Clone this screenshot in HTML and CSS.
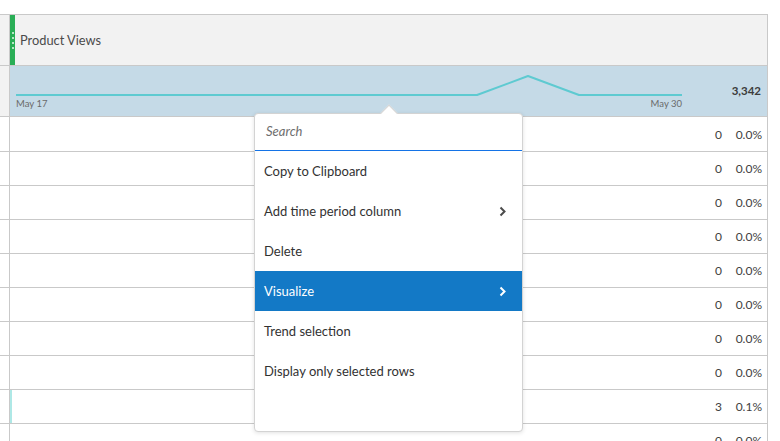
FILE: index.html
```html
<!DOCTYPE html>
<html>
<head>
<meta charset="utf-8">
<link rel="stylesheet" href="styles.css">
</head>
<body>
<div class="table">
  <div class="row head">
    <div class="gutter gray"></div>
    <div class="cell head-cell">
      <div class="grip"><i></i><i></i><i></i><i></i></div>
      <span class="title">Product Views</span>
    </div>
  </div>
  <div class="row band">
    <div class="gutter gray"></div>
    <div class="cell band-cell">
      <div class="chart">
        <svg class="spark" width="666" height="32" viewBox="0 0 666 32">
          <polyline points="0,29 461,29 512,10 563,29 666,29" fill="none" stroke="#5ecad1" stroke-width="2" stroke-linejoin="round"/>
        </svg>
        <div class="labels"><span>May 17</span><span>May 30</span></div>
      </div>
      <div class="total">3,342</div>
    </div>
  </div>
  <div class="row data first"><div class="gutter"></div><div class="cell num-cell"><span class="cnt">0</span><span class="pct">0.0%</span></div></div>
  <div class="row data"><div class="gutter"></div><div class="cell num-cell"><span class="cnt">0</span><span class="pct">0.0%</span></div></div>
  <div class="row data"><div class="gutter"></div><div class="cell num-cell"><span class="cnt">0</span><span class="pct">0.0%</span></div></div>
  <div class="row data"><div class="gutter"></div><div class="cell num-cell"><span class="cnt">0</span><span class="pct">0.0%</span></div></div>
  <div class="row data"><div class="gutter"></div><div class="cell num-cell"><span class="cnt">0</span><span class="pct">0.0%</span></div></div>
  <div class="row data"><div class="gutter"></div><div class="cell num-cell"><span class="cnt">0</span><span class="pct">0.0%</span></div></div>
  <div class="row data"><div class="gutter"></div><div class="cell num-cell"><span class="cnt">0</span><span class="pct">0.0%</span></div></div>
  <div class="row data"><div class="gutter"></div><div class="cell num-cell"><span class="cnt">0</span><span class="pct">0.0%</span></div></div>
  <div class="row data"><div class="gutter"></div><div class="cell num-cell marked"><span class="cnt">3</span><span class="pct">0.1%</span></div></div>
  <div class="row data"><div class="gutter"></div><div class="cell num-cell"><span class="cnt">0</span><span class="pct">0.0%</span></div></div>
</div>

<div class="menu">
  <div class="notch"></div>
  <div class="search"><span class="placeholder">Search</span></div>
  <div class="item">Copy to Clipboard</div>
  <div class="item sub">Add time period column
    <svg class="chev" width="7" height="11" viewBox="0 0 7 11"><polyline points="1.5,1.5 5.5,5.5 1.5,9.5" fill="none" stroke="currentColor" stroke-width="2"/></svg>
  </div>
  <div class="item">Delete</div>
  <div class="item sub active">Visualize
    <svg class="chev" width="7" height="11" viewBox="0 0 7 11"><polyline points="1.5,1.5 5.5,5.5 1.5,9.5" fill="none" stroke="currentColor" stroke-width="2"/></svg>
  </div>
  <div class="item">Trend selection</div>
  <div class="item">Display only selected rows</div>
</div>
</body>
</html>
```
FILE: styles.css
```css
html, body {
  margin: 0;
  padding: 0;
  background: #ffffff;
  font-family: Lato, "Open Sans", sans-serif;
  color: #4b4b4b;
  overflow: hidden;
}
body {
  width: 780px;
  height: 441px;
  padding-top: 14px;
  box-sizing: border-box;
  position: relative;
}
.table {
  width: 768px;
  border-top: 1px solid #c9c9c9;
  border-right: 1px solid #c9c9c9;
  box-sizing: border-box;
}
.row {
  display: flex;
  border-bottom: 1px solid #c9c9c9;
  box-sizing: border-box;
}
.gutter {
  width: 9px;
  flex: none;
  border-right: 1px solid #c9c9c9;
}
.gutter.gray { background: #f2f2f2; }
.cell { flex: 1; display: flex; }

.head { height: 51px; }
.head-cell { background: #f2f2f2; align-items: center; }
.grip {
  width: 5px;
  align-self: stretch;
  background: #2aae56;
  display: flex;
  flex-direction: column;
  align-items: center;
  justify-content: center;
  gap: 3px;
}
.grip i {
  display: block;
  width: 2px;
  height: 2px;
  background: #b6e6c6;
}
.title {
  margin-left: 5px;
  font-size: 12.8px;
  color: #4a4a4a;
}

.band { height: 51px; }
.band-cell { background: #c5dae7; align-items: center; }
.chart {
  width: 666px;
  margin-left: 6px;
  align-self: flex-start;
  display: flex;
  flex-direction: column;
}
.spark { display: block; }
.labels {
  display: flex;
  justify-content: space-between;
  font-size: 9.5px;
  line-height: 11px;
  color: #6a6a6a;
}
.total {
  flex: 1;
  text-align: right;
  padding-right: 6px;
  font-weight: 700;
  font-size: 11.5px;
  color: #3c3c3c;
  padding-bottom: 1px;
}

.data { height: 34px; }
.data.first { height: 35px; }
.num-cell {
  justify-content: flex-end;
  align-items: center;
  padding-right: 5px;
  font-size: 12px;
  color: #3e3e3e;
}
.pct { width: 40px; text-align: right; }
.marked { box-shadow: inset 2px 0 0 #aee8e6; }

.menu {
  position: absolute;
  left: 254px;
  top: 113px;
  width: 269px;
  height: 319px;
  box-sizing: border-box;
  background: #fff;
  border: 1px solid #d3d3d3;
  border-radius: 4px;
  box-shadow: 0 1px 4px rgba(0,0,0,0.12);
  font-size: 13px;
  color: #323232;
}
.notch {
  position: absolute;
  left: 128px;
  top: -7px;
  width: 11px;
  height: 11px;
  background: #fff;
  border-left: 1px solid #d3d3d3;
  border-top: 1px solid #d3d3d3;
  transform: rotate(45deg);
}
.search {
  position: relative;
  height: 36px;
  border-bottom: 1px solid #1473e6;
  display: flex;
  align-items: center;
  padding-left: 11px;
}
.placeholder {
  font-style: italic;
  color: #6e6e6e;
  margin-top: -2px;
}
.item {
  height: 40px;
  display: flex;
  align-items: center;
  padding: 0 16px 0 9px;
}
.item.sub { justify-content: space-between; }
.chev { color: #4b4b4b; display: block; }
.item.active {
  background: #1379c6;
  color: #ffffff;
}
.item.active .chev { color: #ffffff; }
```
